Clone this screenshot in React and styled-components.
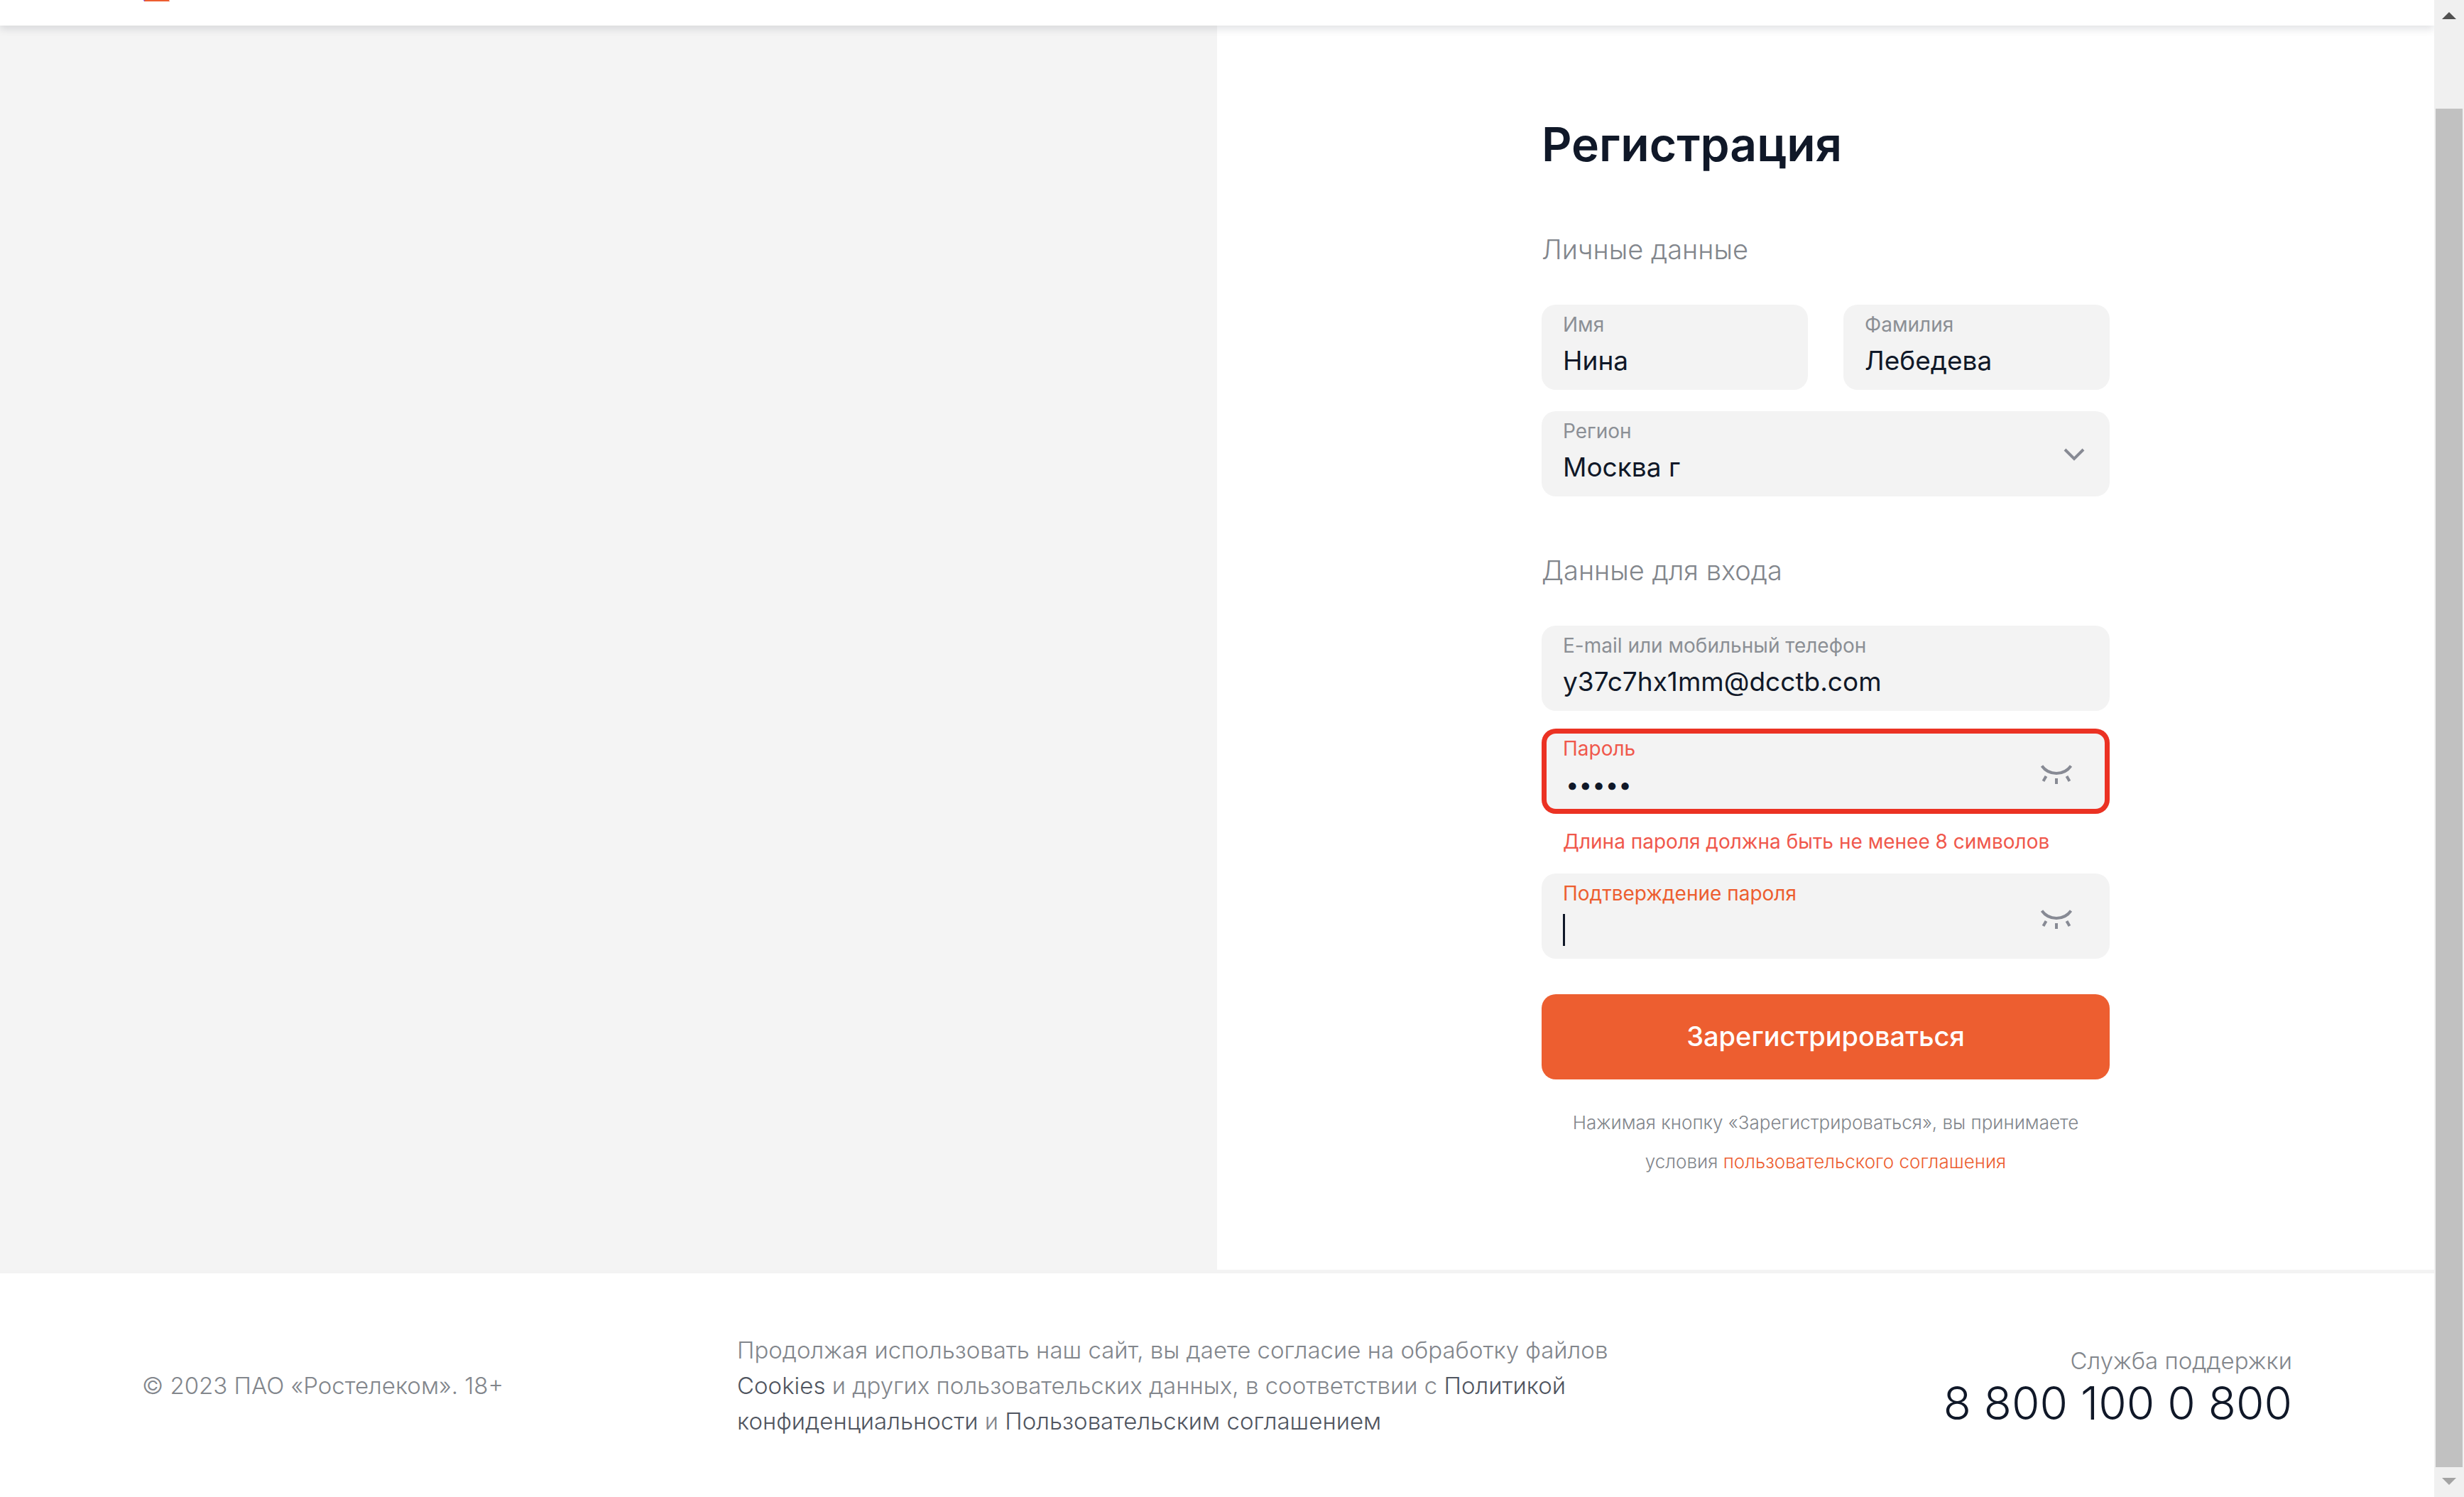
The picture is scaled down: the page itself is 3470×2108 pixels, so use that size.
import React, { useState } from 'react';
import styled, { createGlobalStyle, css } from 'styled-components';

const color = {
  ink: '#101828',
  muted: '#82868c',
  link: '#505560',
  accent: '#ed5e30',
  error: '#eb3223',
  errorText: '#f0584c',
  panel: '#f4f4f4',
  field: '#f3f3f3',
  icon: '#878a94',
};

const GlobalStyle = createGlobalStyle`
  *, *::before, *::after { box-sizing: border-box; }
  body {
    margin: 0;
    background: #fff;
    color: ${color.ink};
    font-family: Inter, "Liberation Sans", sans-serif;
    font-weight: 300;
  }
  input, select, button { font: inherit; color: inherit; }
`;

const Shell = styled.div`
  display: flex;
  min-height: 100vh;
`;

const Page = styled.div`
  flex: 1;
  min-width: 0;
  display: flex;
  flex-direction: column;
`;

const Header = styled.header`
  position: relative;
  z-index: 1;
  height: 36px;
  padding: 0 202px;
  background: #fff;
  box-shadow: 0 5px 12px rgba(16, 24, 40, 0.12);
`;

const LogoEdge = styled.svg`
  display: block;
`;

const Main = styled.main`
  flex: 1;
  display: grid;
  grid-template-columns: 1fr 1fr;
`;

const Promo = styled.div`
  background: ${color.panel};
`;

const FormColumn = styled.div`
  display: flex;
  justify-content: center;
  padding: 127px 40px 125px;
`;

const Form = styled.form`
  width: 100%;
  max-width: 800px;
`;

const Title = styled.h1`
  margin: 0 0 4px;
  font-size: 66px;
  line-height: 80px;
  font-weight: 600;
`;

const Group = styled.fieldset`
  min-width: 0;
  margin: 0;
  padding: 79px 0 0;
  border: 0;
  display: flex;
  flex-direction: column;
`;

const GroupTitle = styled.h2`
  margin: 0 0 53px;
  font-size: 38px;
  line-height: 50px;
  font-weight: 300;
  color: ${color.muted};
`;

const FieldStack = styled.div`
  display: flex;
  flex-direction: column;
  gap: ${(p) => p.$gap}px;
`;

const FieldPair = styled.div`
  display: grid;
  grid-template-columns: 1fr 1fr;
  gap: 50px;
`;

const FieldBox = styled.div`
  position: relative;
  display: flex;
  align-items: center;
  height: 120px;
  padding: 0 ${(p) => p.$inset || 30}px 0 30px;
  border-radius: 20px;
  background: ${color.field};
  ${(p) => p.$invalid && css`box-shadow: inset 0 0 0 7px ${color.error};`}
`;

const FieldText = styled.div`
  flex: 1;
  min-width: 0;
  align-self: stretch;
  display: flex;
  flex-direction: column;
  gap: 8px;
  padding-top: 10px;
`;

const tones = {
  normal: '#8b8f95',
  error: color.errorText,
  active: color.accent,
};

const Label = styled.label`
  font-size: 28px;
  line-height: 36px;
  font-weight: 400;
  color: ${(p) => tones[p.$tone || 'normal']};
`;

const control = css`
  width: 100%;
  height: 50px;
  margin: 0;
  padding: 0;
  border: 0;
  outline: 0;
  background: transparent;
  font-size: 37px;
  font-weight: 400;
  line-height: 50px;
`;

const Input = styled.input`
  ${control}
  &[type='password'] {
    padding-left: 4px;
    font-size: 33px;
  }
`;

const Select = styled.select`
  ${control}
  appearance: none;
`;

const Caret = styled.span`
  position: absolute;
  left: 30px;
  top: 57px;
  width: 3px;
  height: 45px;
  background: ${color.ink};
`;

const IconButton = styled.button`
  flex: none;
  width: 60px;
  height: 60px;
  padding: 0;
  border: 0;
  background: none;
  cursor: pointer;
`;

const Icon = styled.svg`
  display: block;
  flex: none;
  fill: none;
  stroke: ${color.icon};
  stroke-width: 4;
  pointer-events: none;
`;

const ErrorText = styled.p`
  margin: 19px 0 0;
  padding: 0 30px;
  font-size: 28px;
  line-height: 40px;
  font-weight: 400;
  color: ${color.errorText};
`;

const SubmitButton = styled.button`
  width: 100%;
  height: 120px;
  margin-top: 50px;
  padding: 0 30px 3px;
  border: 0;
  border-radius: 20px;
  background: ${color.accent};
  color: #fff;
  font-size: 38px;
  line-height: 50px;
  font-weight: 500;
  cursor: pointer;
`;

const Legal = styled.p`
  margin: 33px 0 0;
  padding: 0 40px;
  font-size: 26px;
  line-height: 55px;
  text-align: center;
  color: ${color.muted};
`;

const Link = styled.a`
  color: ${(p) => (p.$accent ? color.accent : color.link)};
  text-decoration: none;
`;

const Footer = styled.footer`
  display: grid;
  grid-template-columns: 838px minmax(0, 1260px) 1fr;
  align-items: center;
  padding: 83px 200px 82px;
  border-top: 5px solid ${color.field};
  font-size: 33px;
  line-height: 50px;
  color: ${color.muted};
`;

const FooterText = styled.p`
  margin: 0;
`;

const Support = styled.div`
  display: flex;
  flex-direction: column;
  align-items: flex-end;
`;

const Phone = styled.a`
  font-size: 64px;
  line-height: 70px;
  color: ${color.ink};
  text-decoration: none;
`;

const ScrollTrack = styled.div`
  position: relative;
  z-index: 2;
  flex: none;
  display: flex;
  flex-direction: column;
  width: 42px;
  padding: 0 2px;
  background: #f0f0f0;
`;

const ScrollArrow = styled.svg`
  display: block;
  width: 100%;
  height: 42px;
  fill: ${(p) => (p.$dim ? '#a3a3a3' : '#505050')};
`;

const ScrollThumb = styled.div`
  flex: 1;
  margin-top: 111px;
  background: #c1c1c1;
`;

function ChevronIcon() {
  return (
    <Icon width="60" height="60" viewBox="0 0 60 60" aria-hidden="true">
      <path d="M17 24L30 37L43 24" />
    </Icon>
  );
}

function ClosedEyeIcon() {
  return (
    <Icon width="60" height="60" viewBox="0 0 60 60" aria-hidden="true">
      <path d="M9.5 22.5C19.5 36.5 40.5 36.5 50.5 22.5" />
      <path d="M30 40V48M15.5 37L11.5 44M44.5 37L48.5 44" />
    </Icon>
  );
}

function TextField({ id, label, value, type = 'text' }) {
  return (
    <FieldBox>
      <FieldText>
        <Label htmlFor={id}>{label}</Label>
        <Input id={id} type={type} defaultValue={value} />
      </FieldText>
    </FieldBox>
  );
}

function PasswordField({ id, label, value, tone, invalid, caret }) {
  const [shown, setShown] = useState(false);
  return (
    <FieldBox $inset={45} $invalid={invalid}>
      <FieldText>
        <Label htmlFor={id} $tone={tone}>{label}</Label>
        <Input
          id={id}
          type={shown ? 'text' : 'password'}
          defaultValue={value}
          aria-invalid={invalid}
        />
      </FieldText>
      {caret && <Caret />}
      <IconButton type="button" aria-label="Показать пароль" onClick={() => setShown(!shown)}>
        <ClosedEyeIcon />
      </IconButton>
    </FieldBox>
  );
}

export default function App() {
  return (
    <>
      <GlobalStyle />
      <Shell>
        <Page>
          <Header>
            <LogoEdge width="38" height="2" viewBox="0 0 38 2" aria-hidden="true">
              <path d="M0 0H3V2H1Z" fill="#7a3be0" />
              <path d="M2 0H36L37 2H1Z" fill={color.accent} />
            </LogoEdge>
          </Header>
          <Main>
            <Promo />
            <FormColumn>
              <Form onSubmit={(e) => e.preventDefault()}>
                <Title>Регистрация</Title>
                <Group>
                  <GroupTitle>Личные данные</GroupTitle>
                  <FieldStack $gap={30}>
                    <FieldPair>
                      <TextField id="first-name" label="Имя" value="Нина" />
                      <TextField id="last-name" label="Фамилия" value="Лебедева" />
                    </FieldPair>
                    <FieldBox $inset={20}>
                      <FieldText>
                        <Label htmlFor="region">Регион</Label>
                        <Select id="region" defaultValue="moscow">
                          <option value="moscow">Москва г</option>
                        </Select>
                      </FieldText>
                      <ChevronIcon />
                    </FieldBox>
                  </FieldStack>
                </Group>
                <Group>
                  <GroupTitle>Данные для входа</GroupTitle>
                  <FieldStack $gap={25}>
                    <TextField
                      id="login"
                      label="E-mail или мобильный телефон"
                      value="y37c7hx1mm@dcctb.com"
                    />
                    <div>
                      <PasswordField id="password" label="Пароль" value="12345" tone="error" invalid />
                      <ErrorText>Длина пароля должна быть не менее 8 символов</ErrorText>
                    </div>
                    <PasswordField id="confirm" label="Подтверждение пароля" tone="active" caret />
                  </FieldStack>
                </Group>
                <SubmitButton type="submit">Зарегистрироваться</SubmitButton>
                <Legal>
                  Нажимая кнопку «Зарегистрироваться», вы принимаете условия{' '}
                  <Link href="#agreement" $accent>пользовательского соглашения</Link>
                </Legal>
              </Form>
            </FormColumn>
          </Main>
          <Footer>
            <FooterText>© 2023 ПАО «Ростелеком». 18+</FooterText>
            <FooterText>
              Продолжая использовать наш сайт, вы даете согласие на обработку файлов{' '}
              <Link href="#cookies">Cookies</Link> и других пользовательских данных, в соответствии с{' '}
              <Link href="#privacy">Политикой конфиденциальности</Link> и{' '}
              <Link href="#terms">Пользовательским соглашением</Link>
            </FooterText>
            <Support>
              <span>Служба поддержки</span>
              <Phone href="tel:88001000800">8 800 100 0 800</Phone>
            </Support>
          </Footer>
        </Page>
        <ScrollTrack aria-hidden="true">
          <ScrollArrow viewBox="0 0 38 42">
            <path d="M9 27L19 17L29 27Z" />
          </ScrollArrow>
          <ScrollThumb />
          <ScrollArrow viewBox="0 0 38 42" $dim>
            <path d="M9 15L19 25L29 15Z" />
          </ScrollArrow>
        </ScrollTrack>
      </Shell>
    </>
  );
}
